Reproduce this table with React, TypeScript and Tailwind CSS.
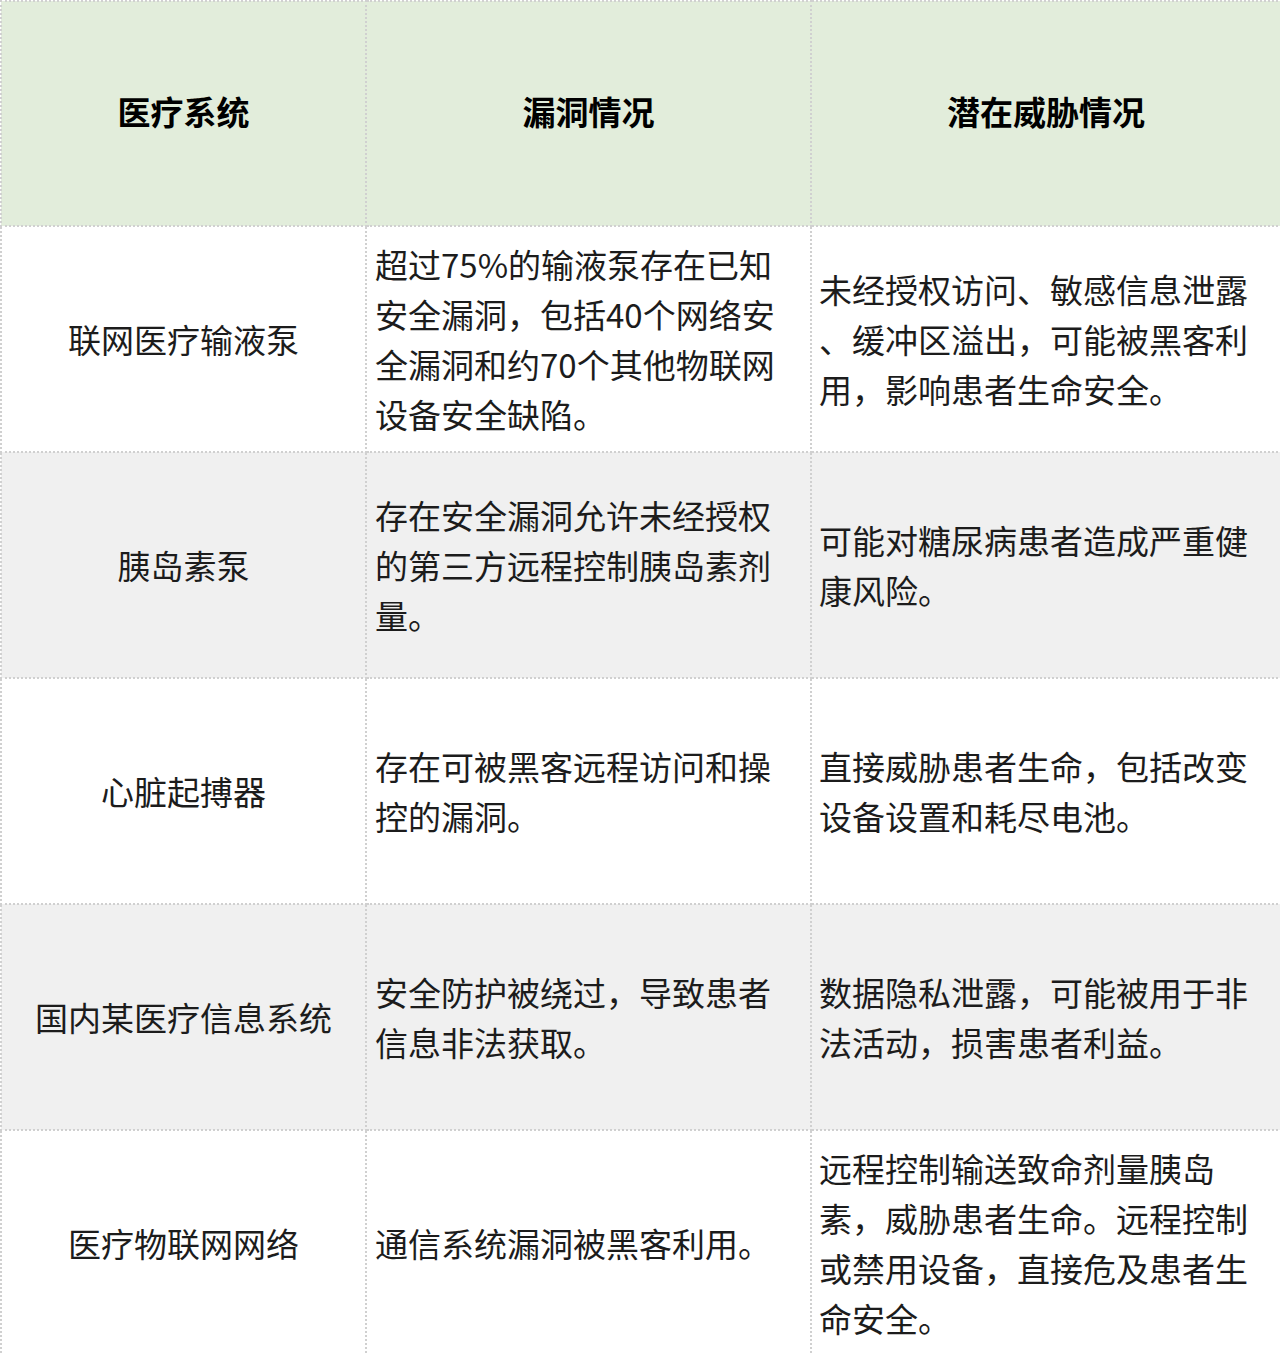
const rows = [
  {
    name: "联网医疗输液泵",
    vuln: "超过75%的输液泵存在已知安全漏洞，包括40个网络安全漏洞和约70个其他物联网设备安全缺陷。",
    threat: "未经授权访问、敏感信息泄露、缓冲区溢出，可能被黑客利用，影响患者生命安全。",
    loose: true,
  },
  {
    name: "胰岛素泵",
    vuln: "存在安全漏洞允许未经授权的第三方远程控制胰岛素剂量。",
    threat: "可能对糖尿病患者造成严重健康风险。",
    loose: false,
  },
  {
    name: "心脏起搏器",
    vuln: "存在可被黑客远程访问和操控的漏洞。",
    threat: "直接威胁患者生命，包括改变设备设置和耗尽电池。",
    loose: false,
  },
  {
    name: "国内某医疗信息系统",
    vuln: "安全防护被绕过，导致患者信息非法获取。",
    threat: "数据隐私泄露，可能被用于非法活动，损害患者利益。",
    loose: false,
  },
  {
    name: "医疗物联网网络",
    vuln: "通信系统漏洞被黑客利用。",
    threat: "远程控制输送致命剂量胰岛素，威胁患者生命。远程控制或禁用设备，直接危及患者生命安全。",
    loose: false,
  },
];

export default function App() {
  return (
    <main className="w-[1280px] h-[1355px] bg-white overflow-hidden font-['Noto_Sans_CJK_SC','Noto_Sans',sans-serif] text-[33px] leading-[50px] text-[#1c1c1c]">
      <table className="w-full table-fixed border-collapse">
        <colgroup>
          <col className="w-[365px]" />
          <col className="w-[445px]" />
          <col className="w-[470px]" />
        </colgroup>
        <thead>
          <tr className="h-[225px] bg-[#e2eddb]">
            <th className="border-2 border-dotted border-[#d0d0d0] pb-[6px] font-bold text-black text-center">医疗系统</th>
            <th className="border-2 border-dotted border-[#d0d0d0] pb-[6px] font-bold text-black text-center">漏洞情况</th>
            <th className="border-2 border-dotted border-[#d0d0d0] pb-[6px] font-bold text-black text-center">潜在威胁情况</th>
          </tr>
        </thead>
        <tbody>
          {rows.map((r, i) => (
            <tr key={r.name} className={i % 2 === 1 ? "h-[226px] bg-[#f0f0f0]" : "h-[226px] bg-white"}>
              <td className="border-2 border-dotted border-[#d0d0d0] text-center px-2">{r.name}</td>
              <td className="border-2 border-dotted border-[#d0d0d0] pl-[8px] pr-[10px] align-middle">{r.vuln}</td>
              <td
                className={
                  r.loose
                    ? "border-2 border-dotted border-[#d0d0d0] pl-[7px] pr-[6px] align-middle [line-break:anywhere]"
                    : "border-2 border-dotted border-[#d0d0d0] pl-[7px] pr-[6px] align-middle"
                }
              >
                {r.threat}
              </td>
            </tr>
          ))}
        </tbody>
      </table>
    </main>
  );
}
